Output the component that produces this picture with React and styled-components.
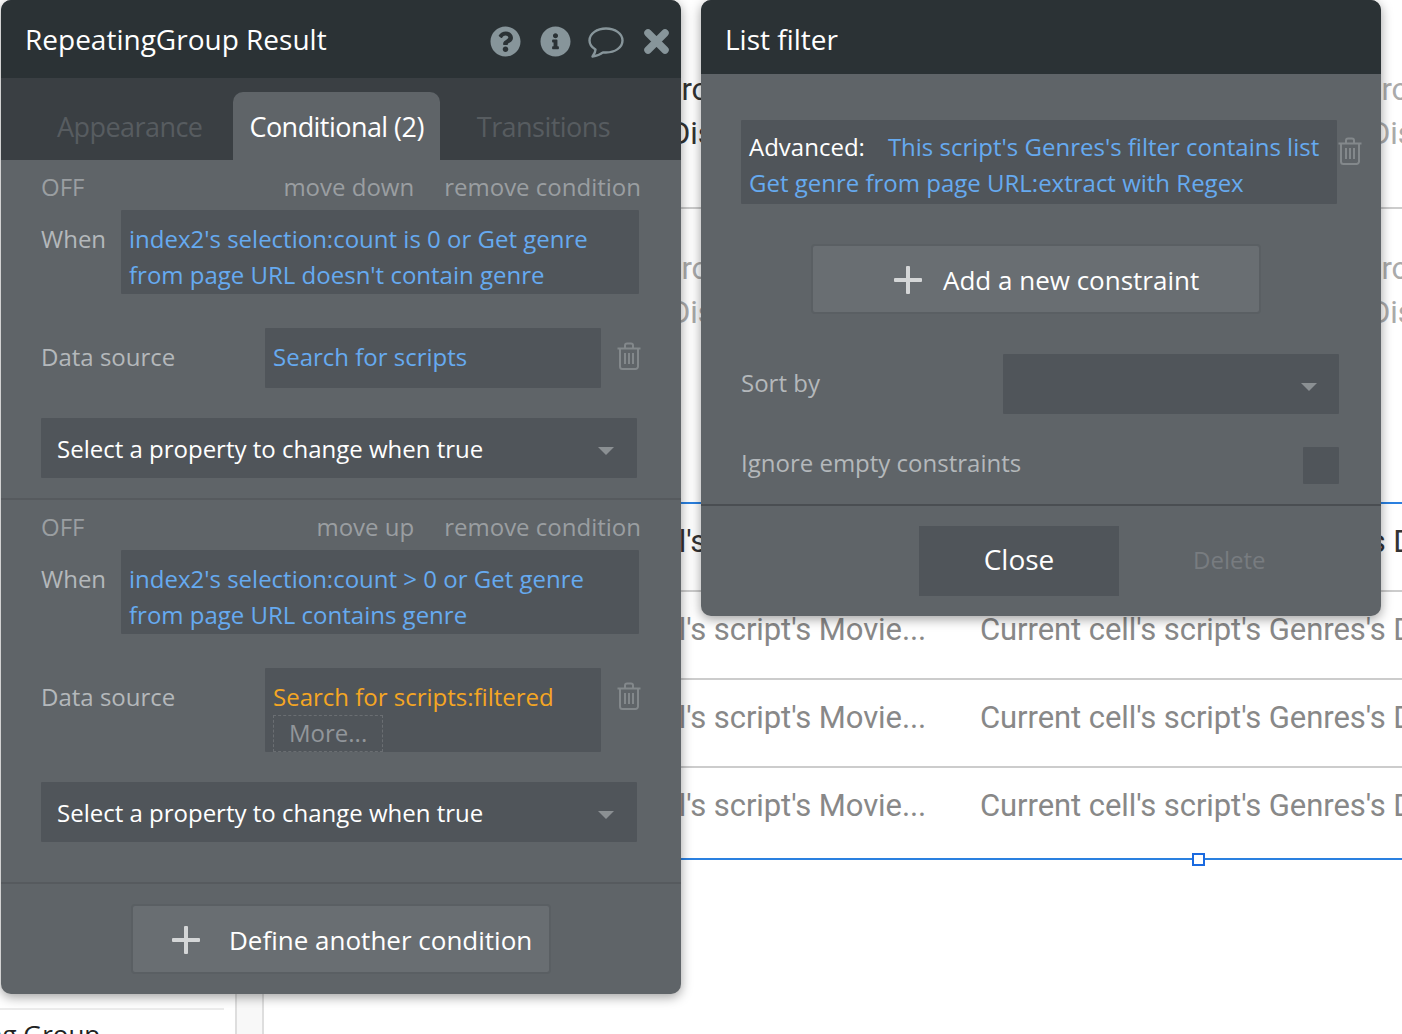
import React from "react";
import styled, { createGlobalStyle } from "styled-components";
import { FaQuestionCircle, FaInfoCircle } from "react-icons/fa";

const Global = createGlobalStyle`
  html, body { margin: 0; padding: 0; background: #fff; overflow: hidden; }
  * { box-sizing: border-box; }
  #root { width: 1402px; height: 1034px; }
`;

const Page = styled.div`
  position: relative;
  display: flex;
  width: 1402px;
  height: 1034px;
  overflow: hidden;
  font-family: "Open Sans", sans-serif;
`;
const Sidebar = styled.aside`
  width: 235px;
  flex: none;
  padding-top: 1008px;
  overflow: hidden;
`;
const SidebarRule = styled.div`
  width: 224px;
  height: 2px;
  background: #ececec;
`;
const SidebarItem = styled.div`
  margin: 9px 0 0 -105px;
  font-size: 26px;
  line-height: 30px;
  color: #222;
  white-space: nowrap;
`;
const Strip = styled.div`
  width: 29px;
  flex: none;
  background: #f8f8f8;
  border-left: 2px solid #dedede;
  border-right: 2px solid #dedede;
`;
const Canvas = styled.main`
  flex: 1;
  min-width: 0;
  padding-top: 30px;
  font-family: Roboto, sans-serif;
  font-size: 31px;
  letter-spacing: -0.08px;
  overflow: hidden;
`;
const UpperRow = styled.div`
  height: 179px;
  padding-top: 38px;
  border-bottom: ${(p) => (p.$ruled ? "2px solid #ccc" : "none")};
`;
const Line = styled.div`
  display: flex;
  height: 44px;
  line-height: 44px;
  white-space: nowrap;
  padding-left: ${(p) => p.$pl}px;
`;
const UpperCell = styled.span`
  width: 700px;
  flex: none;
  color: ${(p) => (p.$dark ? "#333" : "#aaa")};
`;
const LowerList = styled.section`
  position: relative;
  margin-top: 114px;
  border-top: 2px solid #2a80e0;
  border-bottom: 2px solid #2a80e0;
`;
const LowerRow = styled.div`
  display: flex;
  height: ${(p) => p.$h}px;
  padding: 16px 0 0 266px;
  line-height: 44px;
  white-space: nowrap;
  color: ${(p) => (p.$dark ? "#333" : "#888")};
  border-bottom: ${(p) => (p.$last ? "none" : "2px solid #ccc")};
`;
const MovieCell = styled.span`
  width: 450px;
  flex: none;
`;
const Handle = styled.div`
  position: absolute;
  left: 928px;
  bottom: -8px;
  width: 13px;
  height: 13px;
  background: #fff;
  border: 2px solid #1a6ae0;
`;

const Panel = styled.div`
  position: absolute;
  top: 0;
  left: ${(p) => p.$left}px;
  width: 680px;
  height: ${(p) => p.$h}px;
  background: #5f6468;
  border-radius: 10px;
  box-shadow: 0 3px 12px rgba(0, 0, 0, 0.38);
  overflow: hidden;
`;
const Header = styled.header`
  display: flex;
  align-items: center;
  height: ${(p) => p.$h}px;
  padding-left: ${(p) => p.$pl}px;
  background: #2b3235;
  color: #fff;
  font-size: 28px;
`;
const Title = styled.span`
  flex: 1;
  margin-top: ${(p) => p.$mt}px;
`;
const IconBar = styled.div`
  display: flex;
  align-items: center;
  color: #87959a;
  padding: 4px 12px 0 0;
  svg { display: block; flex: none; }
`;
const IconSlot = styled.span`
  display: block;
  margin-left: ${(p) => p.$ml}px;
  margin-top: ${(p) => p.$mt ?? 0}px;
`;
const Tabs = styled.nav`
  display: flex;
  align-items: flex-end;
  height: 82px;
  padding-left: 40px;
  background: #3a3f43;
`;
const Tab = styled.div`
  height: 68px;
  padding: 0 16px;
  margin-right: ${(p) => p.$mr ?? 0}px;
  line-height: 70px;
  font-size: 27px;
  letter-spacing: -0.55px;
  white-space: nowrap;
  border-radius: 10px 10px 0 0;
  color: ${(p) => (p.$active ? "#fff" : "#575c60")};
  background: ${(p) => (p.$active ? "#5f6468" : "transparent")};
`;
const Condition = styled.section`
  height: ${(p) => p.$h}px;
  padding: 10px 40px 0;
  border-bottom: ${(p) => (p.$ruled ? "2px solid #565a5e" : "none")};
`;
const TopRow = styled.div`
  display: flex;
  align-items: center;
  height: 36px;
  padding-bottom: 4px;
  font-size: 24px;
  color: #9a9ea1;
`;
const Off = styled.span`
  flex: 1;
`;
const TopAction = styled.span`
  margin-left: 30px;
  white-space: nowrap;
`;
const WhenRow = styled.div`
  display: flex;
  margin-top: 4px;
`;
const Label = styled.div`
  flex: none;
  width: ${(p) => p.$w}px;
  padding-top: 11px;
  line-height: 36px;
  font-size: 24px;
  color: #b4b8bb;
`;
const Expression = styled.div`
  width: ${(p) => p.$w}px;
  height: ${(p) => p.$h}px;
  padding: ${(p) => p.$pt ?? 11}px 8px 0;
  background: #50555a;
  border-radius: 1px;
  font-size: 24px;
  line-height: 36px;
  color: #66aaf0;
`;
const Orange = styled.span`
  display: block;
  color: #f5a623;
`;
const More = styled.span`
  display: block;
  width: 110px;
  height: 37px;
  padding-left: 15px;
  color: #92969a;
  line-height: 34px;
  border: 1px dashed #6a6e72;
`;
const SourceRow = styled.div`
  display: flex;
  align-items: flex-start;
  margin-top: 34px;
`;
const TrashSlot = styled.div`
  margin: 14px 0 0 16px;
  color: #83888b;
  svg { display: block; }
`;
const Select = styled.div`
  display: flex;
  align-items: center;
  justify-content: space-between;
  width: 596px;
  height: 60px;
  margin-top: 30px;
  padding: 0 23px 0 16px;
  background: #50555a;
  border-radius: 1px;
  color: #fff;
  font-size: 24px;
`;
const Caret = styled.span`
  width: 0;
  height: 0;
  margin-top: 5px;
  border-left: 8px solid transparent;
  border-right: 8px solid transparent;
  border-top: 8px solid #8b9093;
`;
const FooterArea = styled.div`
  display: flex;
  padding: 20px 0 0 130px;
`;
const PlusButton = styled.div`
  display: flex;
  align-items: center;
  width: ${(p) => p.$w}px;
  height: 70px;
  padding-left: ${(p) => p.$pl}px;
  background: #696e72;
  border: 2px solid #5a5f63;
  border-radius: 4px;
  color: #fff;
  font-size: 26px;
  white-space: nowrap;
  svg { flex: none; margin: 2px ${(p) => p.$gap}px 0 0; }
`;
const PlusLabel = styled.span`
  margin-top: 2px;
`;
const FilterBody = styled.div`
  padding: 46px 0 0 40px;
`;
const AdvancedRow = styled.div`
  display: flex;
  align-items: flex-start;
`;
const AdvancedLabel = styled.span`
  color: #fff;
  margin-right: 23px;
`;
const AdvTrash = styled.div`
  margin: 17px 0 0 1px;
  color: #83888b;
  svg { display: block; }
`;
const CenterRow = styled.div`
  padding: 40px 0 0 70px;
`;
const SortRow = styled.div`
  display: flex;
  align-items: center;
  width: 598px;
  margin-top: 40px;
`;
const PlainLabel = styled.div`
  flex: 1;
  margin-top: ${(p) => p.$mt}px;
  font-size: 24px;
  color: #b4b8bb;
`;
const SortSelect = styled.div`
  display: flex;
  align-items: center;
  justify-content: flex-end;
  width: 336px;
  height: 60px;
  padding-right: 22px;
  background: #50555a;
  border-radius: 1px;
`;
const IgnoreRow = styled.div`
  display: flex;
  align-items: center;
  width: 598px;
  margin-top: 33px;
`;
const Checkbox = styled.div`
  width: 36px;
  height: 37px;
  background: #50555a;
  border-radius: 1px;
`;
const Actions = styled.footer`
  display: flex;
  align-items: center;
  height: 110px;
  margin-top: 20px;
  padding: 2px 0 0 218px;
  border-top: 2px solid #4a4e52;
`;
const CloseButton = styled.div`
  display: flex;
  align-items: center;
  justify-content: center;
  width: 200px;
  height: 70px;
  padding-bottom: 5px;
  background: #50555a;
  color: #fff;
  font-size: 28px;
`;
const DeleteButton = styled.div`
  margin: -3px 0 0 74px;
  color: #787c80;
  font-size: 24px;
`;

const Trash = () => (
  <svg width="24" height="28" viewBox="0 0 24 28" fill="none" stroke="currentColor" strokeWidth="2">
    <path d="M0.5 6.5H23.5" />
    <path d="M8 6V3.5A2 2 0 0 1 10 1.5H14A2 2 0 0 1 16 3.5V6" />
    <path d="M3 6.5V24.5A2.5 2.5 0 0 0 5.5 27H18.5A2.5 2.5 0 0 0 21 24.5V6.5" />
    <path d="M8 11V22M12 11V22M16 11V22" />
  </svg>
);
const Plus = () => (
  <svg width="28" height="28" viewBox="0 0 28 28" fill="#d4d6d7">
    <rect x="12" y="0" width="4" height="28" rx="1" />
    <rect x="0" y="12" width="28" height="4" rx="1" />
  </svg>
);
const Cross = () => (
  <svg width="25" height="25" viewBox="0 0 25 25" stroke="currentColor" strokeWidth="7.5" strokeLinecap="round">
    <path d="M4 4L21 21M21 4L4 21" />
  </svg>
);
const Bubble = () => (
  <svg width="36" height="31" viewBox="0 0 36 31" fill="none" stroke="currentColor" strokeWidth="2.4" strokeLinejoin="round">
    <path d="M18 1.5C9 1.5 1.5 6.5 1.5 13.5C1.5 17.5 4 20.5 7.5 22.5C7.5 25 6 27.5 4.5 29.5C8.5 29 12.5 27.5 15 25.4C16 25.5 17 25.5 18 25.5C27 25.5 34.5 20.5 34.5 13.5C34.5 6.5 27 1.5 18 1.5Z" />
  </svg>
);

const movieRows = [
  { h: 88, dark: true },
  { h: 88 },
  { h: 88 },
  { h: 90, last: true },
];

export default function App() {
  return (
    <Page>
      <Global />
      <Sidebar>
        <SidebarRule />
        <SidebarItem>Repeating Group</SidebarItem>
      </Sidebar>
      <Strip />
      <Canvas>
        <UpperRow $ruled>
          <Line $pl={398}><UpperCell $dark>Pro</UpperCell><UpperCell>Pro</UpperCell></Line>
          <Line $pl={406}><UpperCell $dark>Dis</UpperCell><UpperCell>Dis</UpperCell></Line>
        </UpperRow>
        <UpperRow>
          <Line $pl={398}><UpperCell>Pro</UpperCell><UpperCell>Pro</UpperCell></Line>
          <Line $pl={406}><UpperCell>Dis</UpperCell><UpperCell>Dis</UpperCell></Line>
        </UpperRow>
        <LowerList>
          {movieRows.map((r, i) => (
            <LowerRow key={i} $h={r.h} $dark={r.dark} $last={r.last}>
              <MovieCell>Current cell's script's Movie...</MovieCell>
              <span>Current cell's script's Genres's Display</span>
            </LowerRow>
          ))}
          <Handle />
        </LowerList>
      </Canvas>

      <Panel $left={1} $h={994}>
        <Header $h={78} $pl={24}>
          <Title $mt={-1}>RepeatingGroup Result</Title>
          <IconBar>
            <FaQuestionCircle size={31} />
            <IconSlot $ml={19}><FaInfoCircle size={31} /></IconSlot>
            <IconSlot $ml={17} $mt={3}><Bubble /></IconSlot>
            <IconSlot $ml={20}><Cross /></IconSlot>
          </IconBar>
        </Header>
        <Tabs>
          <Tab $mr={15}>Appearance</Tab>
          <Tab $active $mr={21}>Conditional (2)</Tab>
          <Tab>Transitions</Tab>
        </Tabs>
        <Condition $h={340} $ruled>
          <TopRow>
            <Off>OFF</Off>
            <TopAction>move down</TopAction>
            <TopAction>remove condition</TopAction>
          </TopRow>
          <WhenRow>
            <Label $w={80}>When</Label>
            <Expression $w={518} $h={84}>index2's selection:count is 0 or Get genre from page URL doesn't contain genre</Expression>
          </WhenRow>
          <SourceRow>
            <Label $w={224}>Data source</Label>
            <Expression $w={336} $h={60}>Search for scripts</Expression>
            <TrashSlot><Trash /></TrashSlot>
          </SourceRow>
          <Select>Select a property to change when true<Caret /></Select>
        </Condition>
        <Condition $h={384} $ruled>
          <TopRow>
            <Off>OFF</Off>
            <TopAction>move up</TopAction>
            <TopAction>remove condition</TopAction>
          </TopRow>
          <WhenRow>
            <Label $w={80}>When</Label>
            <Expression $w={518} $h={84}>index2's selection:count &gt; 0 or Get genre from page URL contains genre</Expression>
          </WhenRow>
          <SourceRow>
            <Label $w={224}>Data source</Label>
            <Expression $w={336} $h={84}>
              <Orange>Search for scripts:filtered</Orange>
              <More>More...</More>
            </Expression>
            <TrashSlot><Trash /></TrashSlot>
          </SourceRow>
          <Select>Select a property to change when true<Caret /></Select>
        </Condition>
        <FooterArea>
          <PlusButton $w={420} $pl={39} $gap={29}><Plus /><PlusLabel>Define another condition</PlusLabel></PlusButton>
        </FooterArea>
      </Panel>

      <Panel $left={701} $h={616}>
        <Header $h={74} $pl={24}>
          <Title $mt={3}>List filter</Title>
        </Header>
        <FilterBody>
          <AdvancedRow>
            <Expression $w={596} $h={84} $pt={9}>
              <AdvancedLabel>Advanced:</AdvancedLabel>
              This script's Genres's filter contains list Get genre from page URL:extract with Regex
            </Expression>
            <AdvTrash><Trash /></AdvTrash>
          </AdvancedRow>
          <CenterRow>
            <PlusButton $w={450} $pl={81} $gap={21}><Plus /><PlusLabel>Add a new constraint</PlusLabel></PlusButton>
          </CenterRow>
          <SortRow>
            <PlainLabel $mt={-4}>Sort by</PlainLabel>
            <SortSelect><Caret /></SortSelect>
          </SortRow>
          <IgnoreRow>
            <PlainLabel $mt={-6}>Ignore empty constraints</PlainLabel>
            <Checkbox />
          </IgnoreRow>
        </FilterBody>
        <Actions>
          <CloseButton>Close</CloseButton>
          <DeleteButton>Delete</DeleteButton>
        </Actions>
      </Panel>
    </Page>
  );
}
